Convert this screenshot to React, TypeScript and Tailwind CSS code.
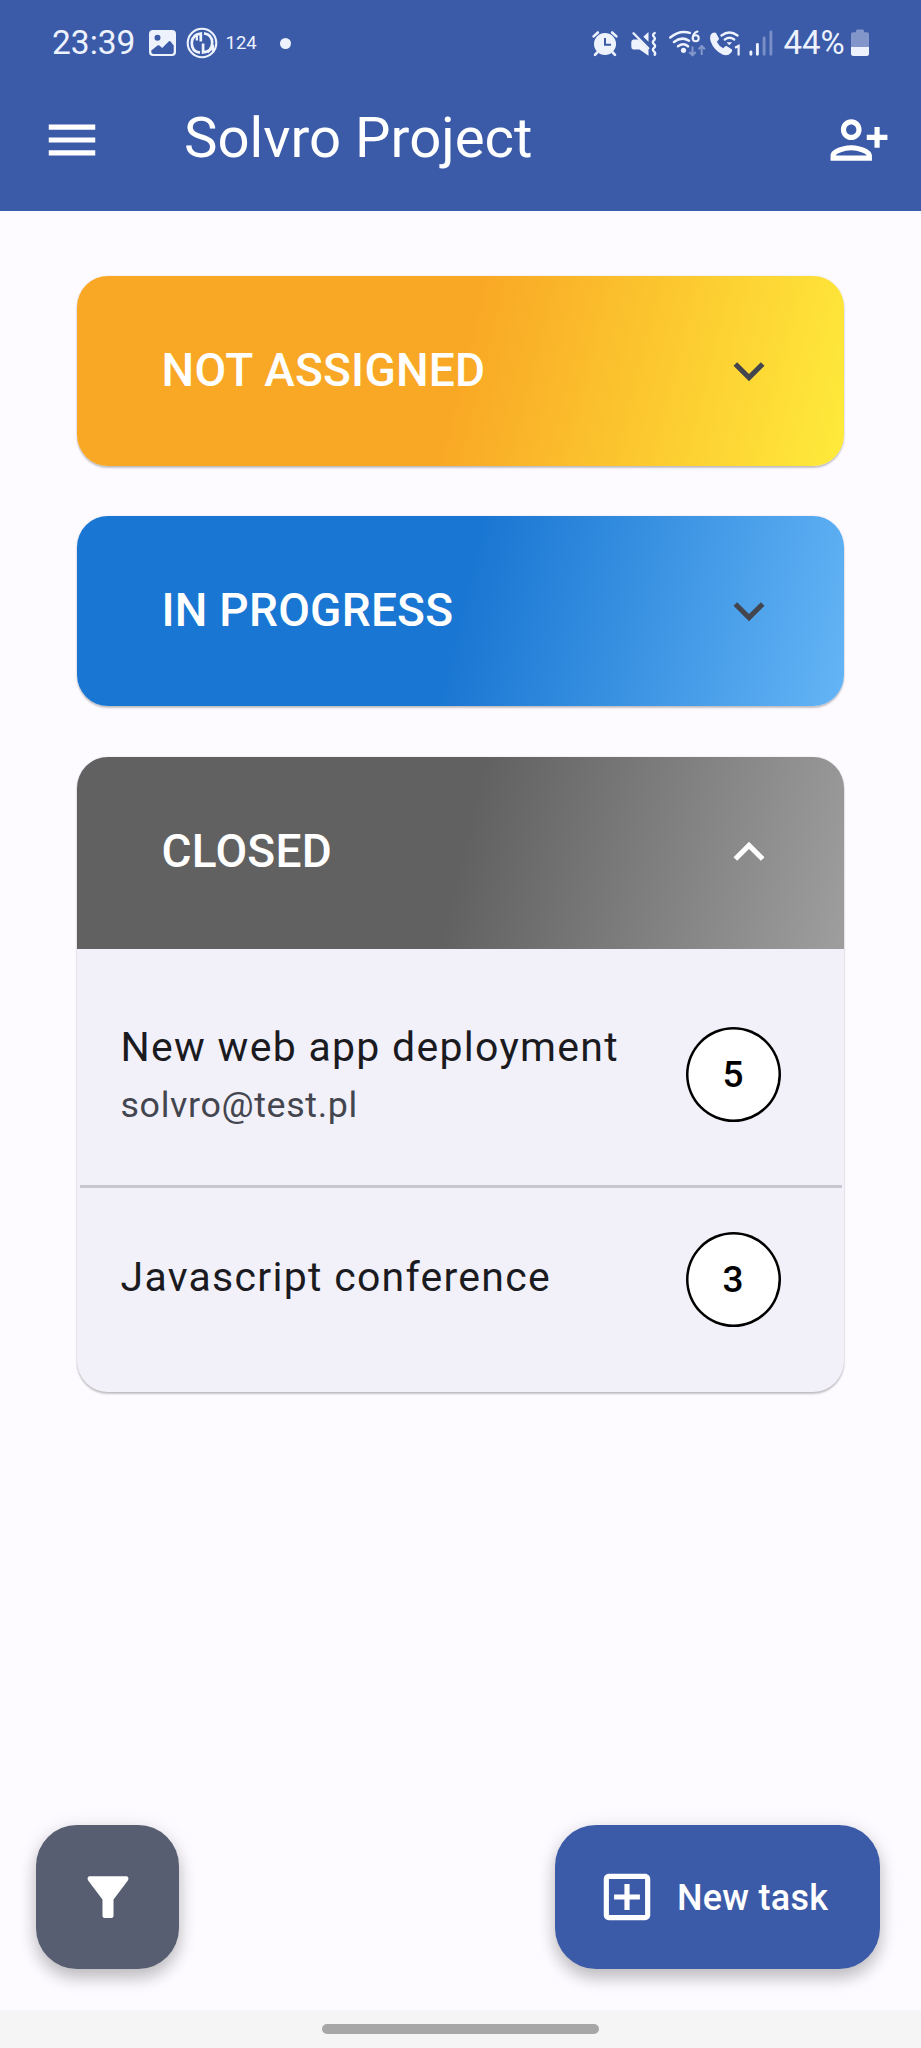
import React from "react";

const STATUS = "#eef2fd";

function PictureIcon() {
  return (
    <svg className="h-[27px] w-[28px]" viewBox="149 30 28 27">
      <path
        fill={STATUS}
        fillRule="evenodd"
        d="M153 30h19a4 4 0 0 1 4 4v18a4 4 0 0 1-4 4h-19a4 4 0 0 1-4-4V34a4 4 0 0 1 4-4zM157.5 34.8a3 3 0 1 0 0 6a3 3 0 0 0 0-6zM151.3 50.5v1.500q0 2 2 2h18.400q2 0 2-2v-6.500l-2.900-3.800q-1.200-1.200-2.400 0l-6.200 6.200-2.800-2.300q-1.300-.8-2.500.4z"
      />
    </svg>
  );
}

function SyncRingIcon() {
  return (
    <svg className="h-[32px] w-[32px]" viewBox="186.500 27 32 32" fill="none" stroke={STATUS}>
      <circle cx="202.500" cy="43" r="14.300" strokeWidth="2.100" />
      <path strokeWidth="2.700" d="M201.300 41.500V33.600Q192.500 34.500 192.300 43T200.500 52.700" />
      <path strokeWidth="2.700" d="M203.600 43.500v8.900Q212.600 51.500 212.700 43T204.500 33.400" />
      <path strokeWidth="2.300" d="M197.300 35.500v5M208 52.500l5.500-5.500v6" />
    </svg>
  );
}

function AlarmIcon() {
  return (
    <svg className="h-[27px] w-[28px]" viewBox="591 29 28 27" fill="none" stroke={STATUS} strokeLinecap="round">
      <circle cx="605" cy="43" r="11" fill={STATUS} stroke="none" />
      <path strokeWidth="2.600" d="M593.600 35.400l4.300-3.900M616.400 35.400l-4.300-3.900M597.200 51.500l-2.200 2.300M612.800 51.500l2.200 2.300" />
      <path stroke="#3b5ba9" strokeWidth="2" strokeLinecap="butt" d="M605 37v6.700h6" />
    </svg>
  );
}

function MuteIcon() {
  return (
    <svg className="h-[27px] w-[28px]" viewBox="630 29 28 27" fill={STATUS}>
      <path d="M648.500 31v9.800L643.300 35.700zM633.300 38.500h5.200L648.500 48.500v6.200L639.500 48.500h-6.200q-2-.5-2-2.500v-5q0-2 2-2.500z" />
      <path fill="none" stroke={STATUS} strokeWidth="2.300" strokeLinecap="round" d="M633.500 32.300L648.300 47.300" />
      <path
        fill="none"
        stroke={STATUS}
        strokeWidth="2.400"
        strokeLinecap="round"
        d="M654.700 32q-2.800 1.500-.8 3.700t-.2 3.900q-1.800 1.700.3 3.500t0 3.700q-2.100 1.900-.1 3.600t.8 3.400"
      />
    </svg>
  );
}

function WifiSixIcon() {
  return (
    <svg className="h-[28px] w-[38px]" viewBox="668 28 38 28" fill="none" stroke={STATUS} strokeLinecap="round">
      <path strokeWidth="2.500" d="M670.300 36.500q9.500-8 19.500-4.600M674 41q7.500-6 15-1.300M678 45.300q5.500-4 10 0" />
      <circle cx="683.500" cy="49.300" r="2.600" fill={STATUS} stroke="none" />
      <path strokeWidth="2.100" d="M697.500 30.500q-4.500 1.500-4.700 6.500" />
      <circle cx="695.700" cy="37.300" r="3" strokeWidth="2.100" />
      <path stroke="#8397ca" strokeWidth="2" strokeLinecap="butt" d="M692.500 45.500v8.800M689.300 51l3.200 3.400 3.200-3.400M701.700 54v-8.800M698.500 48.300l3.200-3.400 3.200 3.400" />
    </svg>
  );
}

function WifiCallIcon() {
  return (
    <svg className="h-[28px] w-[32px]" viewBox="710 28 32 28">
      <path
        fill={STATUS}
        d="M712 32.200q2.600-1.500 4-.1l3 5.300q.4 1.300-2.200 3.300 2 4.300 6.500 6.500 2-2.500 3.300-2.200l5 3.200q1.400 1.300-.6 3.500-3.200 4-8.500 1.800-8.500-4-11.800-13-1.700-6 1.300-8.300z"
      />
      <path fill="none" stroke={STATUS} strokeWidth="2.300" strokeLinecap="round" d="M721.500 34.500q8-6 16 0M724.800 38.500q4.700-3.500 9.400 0" />
      <path fill={STATUS} d="M726.500 41.200h5.600l-2.800 3.100z" />
      <path fill="none" stroke={STATUS} strokeWidth="2.200" d="M735 46.700l3.600-1.800V54.500" />
    </svg>
  );
}

function SignalIcon() {
  return (
    <svg className="h-[26px] w-[24px]" viewBox="748.500 29.500 24 26" strokeLinecap="round" strokeWidth="2.900">
      <path stroke={STATUS} d="M750.400 51.500v2.300M756.900 44v9.800" />
      <path stroke="#7a8fc6" d="M763.600 37.500v16.300M770.400 31.500v22.300" />
    </svg>
  );
}

function BatteryIcon() {
  return (
    <svg className="h-[28px] w-[18px]" viewBox="851 29 18 28">
      <path fill="#8396c9" d="M856 31q0-1.500 1.500-1.500h5q1.500 0 1.500 1.500v1.200h3q2 0 2 2V47h-18V34.200q0-2 2-2h3z" />
      <path fill={STATUS} d="M851 47h18v6.500q0 2.500-2.500 2.500h-13q-2.500 0-2.500-2.500z" />
    </svg>
  );
}

function StatusBar() {
  return (
    <div className="flex h-[68px] items-center pt-[18px] text-[33px] leading-[50px] text-[#eef2fd]">
      <span className="ml-[52px] w-[97px] text-[33.500px]">23:39</span>
      <PictureIcon />
      <div className="ml-[9px]">
        <SyncRingIcon />
      </div>
      <span className="ml-[7.500px] w-[54px] text-[18.500px]">124</span>
      <span className="h-[11px] w-[11px] rounded-full bg-[#eef2fd]" />
      <div className="ml-auto flex items-center pr-[52px]">
        <AlarmIcon />
        <div className="ml-[11px]">
          <MuteIcon />
        </div>
        <div className="ml-[10px]">
          <WifiSixIcon />
        </div>
        <div className="ml-[4px]">
          <WifiCallIcon />
        </div>
        <div className="ml-[6.500px]">
          <SignalIcon />
        </div>
        <span className="ml-[11px] w-[67.500px] whitespace-nowrap">44%</span>
        <BatteryIcon />
      </div>
    </div>
  );
}

function Toolbar() {
  return (
    <div className="flex h-[143px] items-center pl-[41px] pr-[31px] text-white">
      <svg className="h-[62px] w-[62px]" viewBox="0 0 24 24" fill="currentColor">
        <path d="M3 18h18v-2H3v2zm0-5h18v-2H3v2zm0-7v2h18V6H3z" />
      </svg>
      <h1 className="ml-[81px] pb-[4px] text-[56.300px] leading-[72px]">Solvro Project</h1>
      <svg className="ml-auto h-[62px] w-[62px]" viewBox="0 0 24 24" fill="currentColor">
        <path d="M13 8c0-2.210-1.790-4-4-4S5 5.790 5 8s1.790 4 4 4 4-1.790 4-4zm-2 0c0 1.100-.9 2-2 2s-2-.9-2-2 .9-2 2-2 2 .9 2 2zM1 18v2h16v-2c0-2.660-5.330-4-8-4s-8 1.340-8 4zm2 0c.2-.71 3.300-2 6-2 2.690 0 5.780 1.280 6 2H3zm17-3v-3h3v-2h-3V7h-2v3h-3v2h3v3h2z" />
      </svg>
    </div>
  );
}

const CARD_SHADOW = "shadow-[0_2px_2px_rgba(0,0,0,0.22),0_0_2px_rgba(0,0,0,0.12)]";

function SectionHeader({ title, tone, open = false }: { title: string; tone: string; open?: boolean }) {
  return (
    <div className={`flex items-center justify-between pl-[84.500px] pr-[64px] ${tone}`}>
      <h2 className="pb-[2px] text-[46px] font-medium leading-[56px] tracking-[0.250px] text-white">{title}</h2>
      <svg
        className={`h-[62px] w-[62px] ${open ? "text-white" : "text-[#44464f]"}`}
        viewBox="0 0 24 24"
        fill="currentColor"
      >
        {open ? (
          <path d="M12 8l-6 6 1.410 1.410L12 10.830l4.590 4.580L18 14z" />
        ) : (
          <path d="M16.590 8.590L12 13.170 7.410 8.590 6 10l6 6 6-6z" />
        )}
      </svg>
    </div>
  );
}

function Points({ value }: { value: number }) {
  return (
    <span className="flex h-[95px] w-[95px] items-center justify-center rounded-full bg-white pt-[1.500px] text-[37px] font-medium leading-[44px] text-black shadow-[inset_0_0_0_2.500px_#000]">
      {value}
    </span>
  );
}

export default function App() {
  return (
    <div className="flex h-[2048px] w-full flex-col bg-[#fdfbff] font-['Roboto',sans-serif]">
      <header className="h-[211px] shrink-0 bg-[#3b5ba9]">
        <StatusBar />
        <Toolbar />
      </header>

      <main className="flex flex-1 flex-col px-[77px] pt-[64.500px]">
        <section className={`overflow-hidden rounded-[31px] ${CARD_SHADOW}`}>
          <SectionHeader
            title="NOT ASSIGNED"
            tone="h-[190px] bg-[linear-gradient(103.900deg,#f9a825_50%,#ffeb3b_100%)]"
          />
        </section>
        <section className={`mt-[50.500px] overflow-hidden rounded-[31px] ${CARD_SHADOW}`}>
          <SectionHeader
            title="IN PROGRESS"
            tone="h-[190px] bg-[linear-gradient(103.900deg,#1976d2_50%,#64b5f6_100%)]"
          />
        </section>
        <section className={`mt-[51px] h-[635px] overflow-hidden rounded-[31px] bg-[#f2f1fa] ${CARD_SHADOW}`}>
          <SectionHeader
            title="CLOSED"
            open
            tone="h-[192px] pb-[3px] bg-[linear-gradient(103.900deg,#616161_50%,#9e9e9e_100%)]"
          />
          <ul>
            <li className="mx-[2.500px] flex h-[239px] items-center justify-between border-b-[3px] border-[#c8c7d1] pl-[41px] pr-[61px] pt-[15px]">
              <div>
                <p className="text-[41px] leading-[61px] tracking-[1.280px] text-[#1b1b1f]">New web app deployment</p>
                <p className="text-[35.800px] leading-[54px] tracking-[0.640px] text-[#44464f]">solvro@test.pl</p>
              </div>
              <Points value={5} />
            </li>
            <li className="mx-[2.500px] flex h-[182px] items-center justify-between pl-[41px] pr-[61px]">
              <p className="pb-[3px] text-[41px] leading-[61px] tracking-[1.280px] text-[#1b1b1f]">Javascript conference</p>
              <Points value={3} />
            </li>
          </ul>
        </section>
      </main>

      <div className="flex h-[185px] shrink-0 items-start justify-between pl-[36px] pr-[41px]">
        <button className="flex h-[143.500px] w-[143px] items-center justify-center rounded-[41px] bg-[#575e71] shadow-[0_10px_16px_rgba(0,0,0,0.18),0_3px_20px_rgba(0,0,0,0.12)]">
          <svg className="h-[42px] w-[42px]" viewBox="0 0 42 42" fill="#fff">
            <path d="M2 .3H40Q42.500 1.800 40.700 4.700L26.500 23.500V40Q26.300 41.800 24.500 42H17.500Q15.700 41.800 15.500 40V23.500L1.300 4.700Q-.5 1.800 2 .3z" />
          </svg>
        </button>
        <button className="flex h-[143.500px] w-[325px] items-center rounded-[41px] bg-[#3b5ba9] pl-[40.500px] text-white shadow-[0_10px_16px_rgba(0,0,0,0.18),0_3px_20px_rgba(0,0,0,0.12)]">
          <svg className="h-[62px] w-[62px]" viewBox="0 0 24 24" fill="currentColor">
            <path d="M19 3H5c-1.110 0-2 .9-2 2v14c0 1.100.89 2 2 2h14c1.100 0 2-.9 2-2V5c0-1.100-.9-2-2-2zm0 16H5V5h14v14zm-8-2h2v-4h4v-2h-4V7h-2v4H7v2h4z" />
          </svg>
          <span className="ml-[19.500px] pt-[2px] text-[36px] font-medium leading-[50px] tracking-[0.256px]">New task</span>
        </button>
      </div>

      <footer className="flex h-[38px] shrink-0 items-center justify-center bg-[#f5f5f5]">
        <span className="h-[10px] w-[277px] rounded-full bg-[#a7a7a7]" />
      </footer>
    </div>
  );
}
